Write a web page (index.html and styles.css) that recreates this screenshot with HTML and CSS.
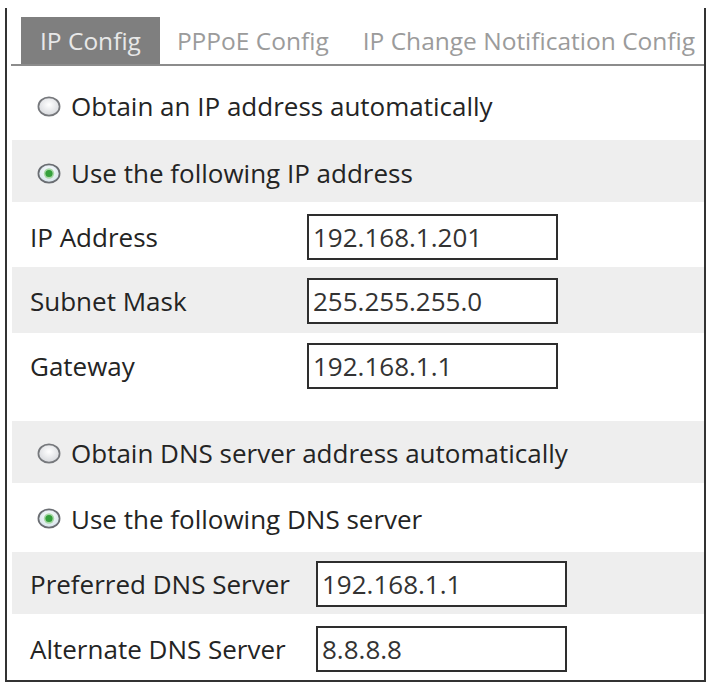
FILE: index.html
```html
<!DOCTYPE html>
<html>
<head>
<meta charset="utf-8">
<link rel="stylesheet" href="styles.css">
</head>
<body>
<div class="panel">
  <div class="tabbar">
    <div class="tab active">IP Config</div>
    <div class="tab">PPPoE Config</div>
    <div class="tab">IP Change Notification Config</div>
  </div>
  <div class="rows">
    <div class="row radio-row r1">
      <svg class="radio" viewBox="0 0 24 21" width="24" height="21"><defs><radialGradient id="g1" cx="50%" cy="40%" r="60%"><stop offset="0" stop-color="#ffffff"/><stop offset="1" stop-color="#d6d8dc"/></radialGradient></defs><ellipse cx="12" cy="10.5" rx="10.6" ry="9.2" fill="url(#g1)" stroke="#76787c" stroke-width="1.7"/></svg>
      <span class="text">Obtain an IP address automatically</span>
    </div>
    <div class="row radio-row gray r2">
      <svg class="radio" viewBox="0 0 24 21" width="24" height="21"><defs><radialGradient id="g2" cx="50%" cy="40%" r="60%"><stop offset="0" stop-color="#ffffff"/><stop offset="1" stop-color="#d4e2ea"/></radialGradient></defs><ellipse cx="12" cy="10.5" rx="10.6" ry="9.2" fill="url(#g2)" stroke="#6a6d72" stroke-width="1.7"/><circle cx="12" cy="10.5" r="5.2" fill="#a9d9a9"/><circle cx="12" cy="10.5" r="3.6" fill="#34a03c"/></svg>
      <span class="text">Use the following IP address</span>
    </div>
    <div class="row field r3">
      <span class="label ip">IP Address</span>
      <div class="input">192.168.1.201</div>
    </div>
    <div class="row field gray r4">
      <span class="label ip">Subnet Mask</span>
      <div class="input">255.255.255.0</div>
    </div>
    <div class="row field r5">
      <span class="label ip">Gateway</span>
      <div class="input">192.168.1.1</div>
    </div>
    <div class="spacer"></div>
    <div class="row radio-row gray r6">
      <svg class="radio" viewBox="0 0 24 21" width="24" height="21"><defs><radialGradient id="g3" cx="50%" cy="40%" r="60%"><stop offset="0" stop-color="#ffffff"/><stop offset="1" stop-color="#d6d8dc"/></radialGradient></defs><ellipse cx="12" cy="10.5" rx="10.6" ry="9.2" fill="url(#g3)" stroke="#76787c" stroke-width="1.7"/></svg>
      <span class="text">Obtain DNS server address automatically</span>
    </div>
    <div class="row radio-row r7">
      <svg class="radio" viewBox="0 0 24 21" width="24" height="21"><defs><radialGradient id="g4" cx="50%" cy="40%" r="60%"><stop offset="0" stop-color="#ffffff"/><stop offset="1" stop-color="#d4e2ea"/></radialGradient></defs><ellipse cx="12" cy="10.5" rx="10.6" ry="9.2" fill="url(#g4)" stroke="#6a6d72" stroke-width="1.7"/><circle cx="12" cy="10.5" r="5.2" fill="#a9d9a9"/><circle cx="12" cy="10.5" r="3.6" fill="#34a03c"/></svg>
      <span class="text">Use the following DNS server</span>
    </div>
    <div class="row field gray r8">
      <span class="label dns">Preferred DNS Server</span>
      <div class="input">192.168.1.1</div>
    </div>
    <div class="row field r9">
      <span class="label dns">Alternate DNS Server</span>
      <div class="input">8.8.8.8</div>
    </div>
  </div>
</div>
</body>
</html>
```
FILE: styles.css
```css
html, body {
  margin: 0;
  padding: 0;
  background: #ffffff;
}
body {
  font-family: "Open Sans", "Noto Sans", sans-serif;
  color: #242424;
}
.panel {
  margin: 8px 0 0 5px;
  width: 697px;
  height: 663px;
  border-left: 2px solid #333333;
  border-right: 2px solid #333333;
  border-bottom: 2px solid #333333;
  padding-top: 9px;
  box-sizing: content-box;
  display: flex;
  flex-direction: column;
  overflow: hidden;
}
.tabbar {
  display: flex;
  margin-left: 4px;
  padding-left: 10px;
  border-bottom: 2px solid #8c8c8c;
  white-space: nowrap;
  overflow: hidden;
  flex: none;
}
.tab {
  height: 47px;
  line-height: 47px;
  padding: 0 17px;
  font-size: 24.5px;
  color: #9b9b9b;
  flex: none;
}
.tab.active {
  background: #7f7f7f;
  color: #e8e8e8;
  padding: 0 19px;
}
.rows {
  margin-left: 5px;
  display: flex;
  flex-direction: column;
}
.row {
  display: flex;
  align-items: center;
  box-sizing: border-box;
  font-size: 26px;
  flex: none;
}
.gray {
  background: #eeeeee;
}
.radio-row {
  padding-left: 25px;
}
.radio {
  flex: none;
  margin-right: 10px;
}
.r1 { height: 74px; padding-top: 6px; }
.r2 { height: 62px; padding-top: 4px; }
.r3 { height: 65px; padding-top: 5px; }
.r4 { height: 66px; padding-top: 2px; }
.r5 { height: 64px; padding-top: 2px; }
.spacer { height: 24px; flex: none; }
.r6 { height: 62px; padding-top: 2px; }
.r7 { height: 69px; padding-top: 2px; }
.r8 { height: 62px; padding-top: 2px; }
.r9 { height: 66px; padding-top: 3px; }
.label {
  padding-left: 18px;
  flex: none;
  box-sizing: border-box;
}
.label.ip { width: 295px; }
.label.dns { width: 304px; }
.input {
  width: 251px;
  height: 46px;
  box-sizing: border-box;
  border: 2px solid #2e2e2e;
  background: #ffffff;
  padding-left: 4px;
  line-height: 42px;
  color: #333333;
  font-size: 26px;
}
```
